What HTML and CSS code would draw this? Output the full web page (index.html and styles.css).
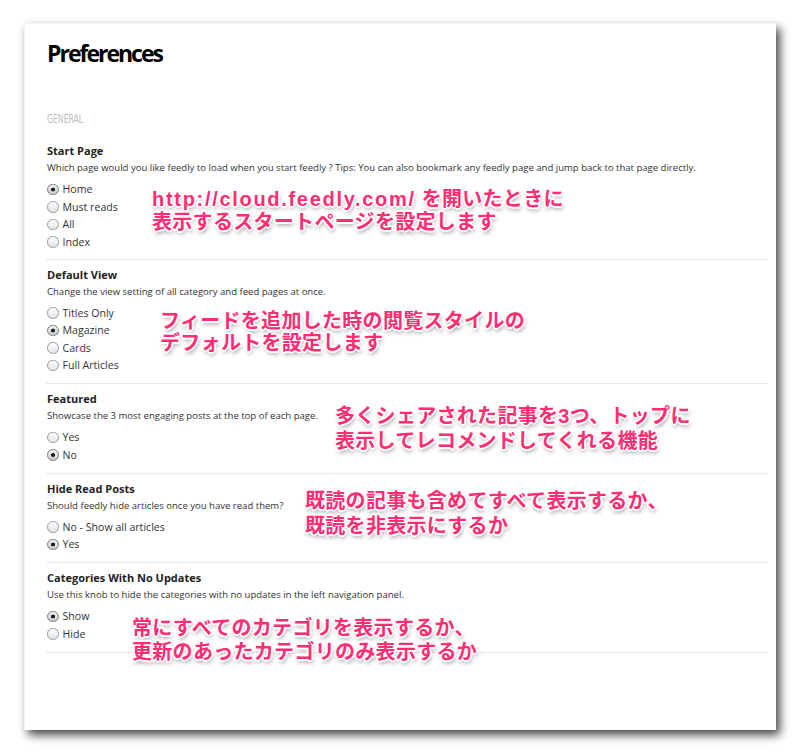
FILE: index.html
```html
<!DOCTYPE html>
<html lang="ja">
<head>
<meta charset="utf-8">
<title>Preferences</title>
<link rel="stylesheet" href="styles.css">
</head>
<body>
<div class="page">
  <div class="card">
    <h1 class="title">Preferences</h1>
    <div class="group-label"><span>GENERAL</span></div>

    <section class="pref">
      <h3 class="pref-title">Start Page</h3>
      <p class="pref-desc">Which page would you like feedly to load when you start feedly ? Tips: You can also bookmark any feedly page and jump back to that page directly.</p>
      <ul class="options">
        <li class="option"><span class="radio checked"></span>Home</li>
        <li class="option"><span class="radio"></span>Must reads</li>
        <li class="option"><span class="radio"></span>All</li>
        <li class="option"><span class="radio"></span>Index</li>
      </ul>
    </section>

    <section class="pref">
      <h3 class="pref-title">Default View</h3>
      <p class="pref-desc">Change the view setting of all category and feed pages at once.</p>
      <ul class="options">
        <li class="option"><span class="radio"></span>Titles Only</li>
        <li class="option"><span class="radio checked"></span>Magazine</li>
        <li class="option"><span class="radio"></span>Cards</li>
        <li class="option"><span class="radio"></span>Full Articles</li>
      </ul>
    </section>

    <section class="pref">
      <h3 class="pref-title">Featured</h3>
      <p class="pref-desc">Showcase the 3 most engaging posts at the top of each page.</p>
      <ul class="options">
        <li class="option"><span class="radio"></span>Yes</li>
        <li class="option"><span class="radio checked"></span>No</li>
      </ul>
    </section>

    <section class="pref">
      <h3 class="pref-title">Hide Read Posts</h3>
      <p class="pref-desc">Should feedly hide articles once you have read them?</p>
      <ul class="options">
        <li class="option"><span class="radio"></span>No - Show all articles</li>
        <li class="option"><span class="radio checked"></span>Yes</li>
      </ul>
    </section>

    <section class="pref">
      <h3 class="pref-title">Categories With No Updates</h3>
      <p class="pref-desc">Use this knob to hide the categories with no updates in the left navigation panel.</p>
      <ul class="options">
        <li class="option"><span class="radio checked"></span>Show</li>
        <li class="option"><span class="radio"></span>Hide</li>
      </ul>
    </section>
  </div>

  <div class="note note-start"><span class="latin">http://cloud.feedly.com/</span> を開いたときに<br>表示するスタートページを設定します</div>
  <div class="note note-view">フィードを追加した時の閲覧スタイルの<br>デフォルトを設定します</div>
  <div class="note note-featured">多くシェアされた記事を3つ、トップに<br>表示してレコメンドしてくれる機能</div>
  <div class="note note-read">既読の記事も含めてすべて表示するか、<br>既読を非表示にするか</div>
  <div class="note note-cat">常にすべてのカテゴリを表示するか、<br>更新のあったカテゴリのみ表示するか</div>
</div>
</body>
</html>
```

FILE: styles.css
```css
* { box-sizing: border-box; }

html, body {
  margin: 0;
  padding: 0;
  background: #ffffff;
}

.page {
  position: relative;
  width: 800px;
  height: 754px;
  overflow: hidden;
  padding-top: 23px;
  padding-left: 24px;
  font-family: "Open Sans", "DejaVu Sans", sans-serif;
  color: #333;
}

.card {
  width: 752px;
  height: 707px;
  background: #fff;
  padding: 15px 9px 0 22px;
  border-top: 1px solid #f4f4f4;
  border-left: 1px solid #f4f4f4;
  box-shadow: 4px 5px 9px rgba(0, 0, 0, 0.72);
}

.title {
  margin: 0;
  font-size: 23px;
  line-height: 28px;
  font-weight: 700;
  letter-spacing: -2px;
  color: #000;
}

.group-label {
  margin-top: 43px;
  height: 14px;
  line-height: 14px;
}

.group-label span {
  display: inline-block;
  font-family: "DejaVu Sans Condensed", "DejaVu Sans", sans-serif;
  font-size: 13px;
  color: #bdbdbd;
  transform: scaleX(0.66);
  transform-origin: left center;
}

.pref {
  padding: 6px 0 9px;
  border-bottom: 1px dotted #d4d4d4;
}

.group-label + .pref {
  padding-top: 18px;
  padding-bottom: 8px;
}

.pref-title {
  margin: 0;
  font-size: 11px;
  line-height: 17px;
  font-weight: 700;
  color: #222;
}

.pref-desc {
  margin: 0;
  font-size: 9.55px;
  line-height: 17px;
  color: #333;
}

.options {
  list-style: none;
  margin: 4.5px 0 0;
  padding: 0;
}

.option {
  display: flex;
  align-items: center;
  height: 17.5px;
  font-size: 10.6px;
  color: #333;
}

.radio {
  flex: none;
  width: 11.5px;
  height: 11.5px;
  margin-right: 4px;
  border-radius: 50%;
  border: 1px solid #9a9a9a;
  background: linear-gradient(#ffffff, #e3e3e3);
}

.radio.checked {
  background: radial-gradient(circle, #222 0, #222 1.7px, transparent 2.2px), linear-gradient(#f2f2f2, #c9c9c9);
  border-color: #7d7d7d;
}

.note {
  position: absolute;
  font-family: "Liberation Sans", "Noto Sans CJK JP", sans-serif;
  font-size: 20px;
  line-height: 24px;
  font-weight: 700;
  color: #ff2d72;
  white-space: nowrap;
  letter-spacing: 0.3px;
  text-shadow:
    1px 0 0 #fff, -1px 0 0 #fff, 0 1px 0 #fff, 0 -1px 0 #fff,
    1px 1px 0 #fff, -1px -1px 0 #fff, 1px -1px 0 #fff, -1px 1px 0 #fff,
    2px 0 0 #fff, -2px 0 0 #fff, 0 2px 0 #fff, 0 -2px 0 #fff,
    1px 3px 4px rgba(0, 0, 0, 0.45);
}

.note .latin {
  letter-spacing: 1.7px;
}

.note-start { left: 152px; top: 188px; line-height: 23px; }
.note-view { left: 160px; top: 310px; line-height: 22px; }
.note-featured { left: 335px; top: 404px; line-height: 25px; }
.note-read { left: 305px; top: 489px; line-height: 25px; }
.note-cat { left: 132px; top: 617px; line-height: 23.5px; }
```
